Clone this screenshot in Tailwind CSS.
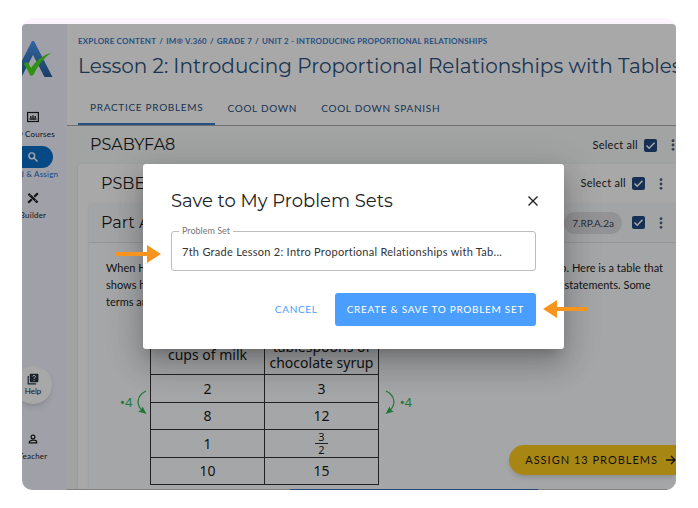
<!DOCTYPE html>
<html lang="en">
<head>
  <meta charset="UTF-8">
  <meta name="viewport" content="width=device-width,initial-scale=1">
  <title>Save to My Problem Sets</title>
  <script src="https://cdn.jsdelivr.net/npm/@tailwindcss/browser@4"></script>
</head>
<body class="bg-white px-[22px] pt-[18px] font-['Lato',sans-serif] text-[#1c1c1c]">
  <div class="bg-[#fcf4fd] rounded-xl pt-[6px]">
    <div class="relative flex overflow-hidden rounded-t-sm rounded-b-[10px] bg-white">

      <!-- Sidebar -->
      <nav class="flex w-[45px] shrink-0 justify-end overflow-hidden bg-[#f1f3ff]">
        <div class="flex w-[68px] shrink-0 flex-col items-center pt-4 text-[8px] leading-3 tracking-wide whitespace-nowrap">
          <svg class="h-10 w-10" viewBox="0 0 40 40">
            <defs>
              <linearGradient id="logo" x1="0" y1="0" x2="0" y2="1">
                <stop offset="0" stop-color="#4c9af2"/>
                <stop offset="1" stop-color="#285f9c"/>
              </linearGradient>
            </defs>
            <path fill="url(#logo)" d="M19 1h2l18.500 36h-8L20 15 8.500 37h-8z"/>
            <path fill="#4ade1c" d="M10.800 24c1-1.200 2.200-1.900 3.400-1.700 1.500 1.700 2.800 3.600 3.900 5.800C23 20.500 30 15.200 38.500 12.800c-8 5.200-13.500 12.500-17.700 21.700-1.200 1-2.500 1.300-3.600 1.100-1.800-4.300-3.900-8.200-6.400-11.600z"/>
          </svg>
          <a href="#" class="mt-[31px] flex flex-col items-center">
            <svg class="h-3 w-3" viewBox="0 0 12 12" fill="none" stroke="#1c1c1c">
              <rect x=".6" y="1.500" width="10.800" height="9" stroke-width="1.200"/>
              <path d="M2.500 8h7" stroke-width="1.600"/>
              <path d="M3.800 5v2M6 4.300v3M8.200 5v2" stroke-width="1.300"/>
            </svg>
            <span class="mt-[5px]">My Courses</span>
          </a>
          <a href="#" class="mt-1.5 flex flex-col items-center text-[#176bd0]">
            <span class="flex h-[22px] w-10 items-center justify-center rounded-full bg-[#0b6fc8]">
              <svg class="h-3 w-3" viewBox="0 0 12 12" fill="none" stroke="#fff" stroke-width="1.400">
                <circle cx="4.800" cy="4.800" r="2.900"/>
                <path d="M7 7l3.500 3.500"/>
              </svg>
            </span>
            <span>Find &amp; Assign</span>
          </a>
          <a href="#" class="mt-3 flex flex-col items-center">
            <svg class="h-3 w-3" viewBox="0 0 12 12" fill="none" stroke="#1c1c1c">
              <path d="M1.500 1.800l9 8.700" stroke-width="2.400"/>
              <path d="M10.800 1.200L7.300 4.700M4.800 7.200L1.200 10.800" stroke-width="2.200"/>
              <path d="M2.500 4l1.500-1.500M7.800 9.200l1.500-1.500" stroke="#f1f3ff" stroke-width=".6"/>
            </svg>
            <span class="mt-[5px]">Builder</span>
          </a>
          <a href="#" class="mt-auto flex h-[38px] w-[38px] flex-col items-center justify-center rounded-full bg-white tracking-normal shadow-md">
            <svg class="h-3 w-3" viewBox="0 0 12 12">
              <path fill="none" stroke="#2a3342" stroke-width="1.200" d="M1.200 3v7.900h7.900"/>
              <rect x="2.800" y=".7" width="8.600" height="8.600" rx=".8" fill="#2a3342"/>
              <path fill="none" stroke="#fff" d="M5.600 3.500c.2-1.500 3-1.400 2.900.2 0 1-1.400 1-1.400 2.100M7.100 6.800v1"/>
            </svg>
            Help
          </a>
          <a href="#" class="mt-[29px] mb-7 flex flex-col items-center">
            <svg class="h-3 w-3" viewBox="0 0 12 12" fill="none" stroke="#1c1c1c" stroke-width="1.200">
              <circle cx="6" cy="4" r="1.900"/>
              <path d="M2.300 9.900V9c0-1.100 2.200-1.800 3.700-1.800S9.700 7.900 9.700 9v.9z"/>
            </svg>
            <span class="mt-[5px]">Teacher</span>
          </a>
        </div>
      </nav>

      <!-- Page -->
      <main class="min-w-0 flex-1 overflow-hidden border-b border-[#c2c2c4] bg-[#f6f8f8]">
        <header class="border-b border-[#aaaaaa] bg-white pt-3 pl-[11px] whitespace-nowrap text-[#2a507c]">
          <div class="flex gap-[3px] text-[8px] leading-[10px] font-bold tracking-wide text-[#3a78c8]">
            <a href="#">EXPLORE CONTENT</a><span>/</span>
            <a href="#">IM® V.360</a><span>/</span>
            <a href="#">GRADE 7</a><span>/</span>
            <a href="#">UNIT 2 - INTRODUCING PROPORTIONAL RELATIONSHIPS</a>
          </div>
          <h1 class="mt-[5px] font-['Montserrat','Inter',sans-serif] text-[20px] leading-[30px]">Lesson 2: Introducing Proportional Relationships with Tables</h1>
          <div class="mt-2.5 flex text-[10px] tracking-[0.07em]">
            <button class="h-[34px] border-b-2 border-[#3a78c8] px-3">PRACTICE PROBLEMS</button>
            <button class="h-[34px] px-3">COOL DOWN</button>
            <button class="h-[34px] px-3">COOL DOWN SPANISH</button>
          </div>
        </header>

        <div class="flex h-[38px] items-center gap-[13px] pl-[23px]">
          <h2 class="flex-1 font-['Montserrat','Inter',sans-serif] text-[16px]">PSABYFA8</h2>
          <label class="flex items-center gap-1.5 text-[11px] tracking-wide">Select all
            <span class="grid">
              <input type="checkbox" checked class="col-start-1 row-start-1 h-[13px] w-[13px] appearance-none rounded-[2px] bg-[#214a80]">
              <svg class="pointer-events-none col-start-1 row-start-1 h-[13px] w-[13px]" viewBox="0 0 13 13" fill="none" stroke="#fff" stroke-width="1.500"><path d="M2.500 6.500l2.700 2.700 5.300-5.500"/></svg>
            </span>
          </label>
          <button aria-label="More"><svg class="h-3 w-1.5" viewBox="0 0 6 12" fill="#4a6282"><circle cx="3" cy="1.700" r="1.400"/><circle cx="3" cy="6" r="1.400"/><circle cx="3" cy="10.300" r="1.400"/></svg></button>
        </div>

        <section class="ml-[11px] rounded-tl bg-white pl-[11px] shadow">
          <div class="flex h-[39px] items-center gap-[13px] pr-3 pl-3">
            <h3 class="flex-1 font-['Montserrat','Inter',sans-serif] text-[16px]">PSBEZ3K</h3>
            <label class="flex items-center gap-1.5 text-[11px] tracking-wide">Select all
              <span class="grid">
                <input type="checkbox" checked class="col-start-1 row-start-1 h-[13px] w-[13px] appearance-none rounded-[2px] bg-[#214a80]">
                <svg class="pointer-events-none col-start-1 row-start-1 h-[13px] w-[13px]" viewBox="0 0 13 13" fill="none" stroke="#fff" stroke-width="1.500"><path d="M2.500 6.500l2.700 2.700 5.300-5.500"/></svg>
              </span>
            </label>
            <button aria-label="More"><svg class="h-3 w-1.5" viewBox="0 0 6 12" fill="#4a6282"><circle cx="3" cy="1.700" r="1.400"/><circle cx="3" cy="6" r="1.400"/><circle cx="3" cy="10.300" r="1.400"/></svg></button>
          </div>

          <article class="rounded-tl bg-[#fbfcff] shadow-sm">
            <div class="flex h-10 items-center gap-[13px] border-b border-[#e3e4e6] bg-[#f8f9fb] pr-3 pl-3">
              <h4 class="flex-1 font-['Montserrat','Inter',sans-serif] text-[16px]">Part A</h4>
              <div class="flex items-center gap-2.5">
                <span class="rounded-full bg-[#dfe0e4] px-2 text-[10px] leading-[22px] text-[#3c4450]">7.RP.A.2a</span>
                <span class="grid">
                  <input type="checkbox" aria-label="Select Part A" checked class="col-start-1 row-start-1 h-[13px] w-[13px] appearance-none rounded-[2px] bg-[#214a80]">
                  <svg class="pointer-events-none col-start-1 row-start-1 h-[13px] w-[13px]" viewBox="0 0 13 13" fill="none" stroke="#fff" stroke-width="1.500"><path d="M2.500 6.500l2.700 2.700 5.300-5.500"/></svg>
                </span>
              </div>
              <button aria-label="More"><svg class="h-3 w-1.5" viewBox="0 0 6 12" fill="#4a6282"><circle cx="3" cy="1.700" r="1.400"/><circle cx="3" cy="6" r="1.400"/><circle cx="3" cy="10.300" r="1.400"/></svg></button>
            </div>

            <p class="pt-4 pl-[17px] text-[11px] leading-[17px] whitespace-nowrap">
              When Han makes chocolate milk, he mixes 2 cups of milk with 3 tablespoons of chocolate syrup. Here is a table that<br>
              shows how to make batches of different sizes. Use the information in the table to complete the statements. Some<br>
              terms are used more than once.
            </p>

            <div class="mt-6 flex items-start pb-1 pl-[31px] font-['Noto_Sans',sans-serif] text-[14px]">
              <div class="mt-14 mr-[3px] flex w-[27px] items-center justify-between text-[13px] leading-6 text-[#36b553]">
                •4
                <svg class="h-6 w-2.5 shrink-0" viewBox="0 0 10 24"><path d="M9 1C-1 6-.5 15 5 20" fill="none" stroke="#36b553" stroke-width="1.200"/><path fill="#36b553" d="M9.500 24L1 21.500l3-1.500 1.500-3.500z"/></svg>
              </div>
              <table class="border-collapse border border-[#333] text-center leading-4">
                <thead>
                  <tr class="h-10">
                    <th class="w-[114px] border border-[#333] font-normal">cups of milk</th>
                    <th class="w-[114px] border border-[#333] font-normal">tablespoons of chocolate syrup</th>
                  </tr>
                </thead>
                <tbody>
                  <tr class="h-7"><td class="border border-[#333]">2</td><td class="border border-[#333]">3</td></tr>
                  <tr class="h-[27px]"><td class="border border-[#333]">8</td><td class="border border-[#333]">12</td></tr>
                  <tr class="h-7">
                    <td class="border border-[#333]">1</td>
                    <td class="border border-[#333]">
                      <span class="inline-flex flex-col align-middle text-[11px] leading-3">
                        <span class="border-b border-[#333] px-[3px]">3</span>
                        <span>2</span>
                      </span>
                    </td>
                  </tr>
                  <tr class="h-[27px]"><td class="border border-[#333]">10</td><td class="border border-[#333]">15</td></tr>
                </tbody>
              </table>
              <div class="mt-14 ml-1.5 flex w-[27px] items-center justify-between text-[13px] leading-6 text-[#36b553]">
                <svg class="h-6 w-2.5 shrink-0" viewBox="0 0 10 24"><path d="M1 1c10 5 9.500 14 4 19" fill="none" stroke="#36b553" stroke-width="1.200"/><path fill="#36b553" d="M.5 24L9 21.500 6 20l-1.500-3.500z"/></svg>
                •4
              </div>
            </div>
          </article>
        </section>
      </main>

      <button class="absolute right-0 bottom-[15px] flex h-[30px] items-center gap-2 rounded-l-full bg-[#ffcb1f] pl-4 text-[11px] tracking-[1px] shadow-md">
        ASSIGN 13 PROBLEMS
        <svg class="h-3 w-2.5" viewBox="0 0 10 12" fill="none" stroke="#1c1c1c" stroke-width="1.300"><path d="M0 6h9M5 2l4 4-4 4"/></svg>
      </button>
      <div class="absolute bottom-0 left-[268px] h-px w-[248px] bg-[#3a6fb4]"></div>

      <!-- Backdrop and dialog -->
      <div class="absolute inset-0 flex items-start justify-center bg-black/34 pt-[140px] pl-[9px]">
        <div role="dialog" aria-labelledby="dialog-title" class="w-[421px] rounded-[3px] bg-white px-7 pt-[25px] pb-[23px] shadow-[0_8px_12px_-5px_rgba(0,0,0,0.2),0_18px_30px_2px_rgba(0,0,0,0.14),0_7px_36px_6px_rgba(0,0,0,0.12)]">
          <div class="flex items-center justify-between">
            <h2 id="dialog-title" class="font-['Montserrat','Inter',sans-serif] text-[18px] leading-6 text-[#222]">Save to My Problem Sets</h2>
            <button aria-label="Close" class="-mr-0.5">
              <svg class="h-2.5 w-2.5" viewBox="0 0 10 10" fill="none" stroke="#222" stroke-width="1.400"><path d="M.5.5l9 9M9.500.5l-9 9"/></svg>
            </button>
          </div>
          <div class="relative mt-[18px]">
            <label for="problem-set" class="absolute -top-[5px] left-2 bg-white px-[3px] text-[9px] leading-[10px] text-[#777]">Problem Set</label>
            <input id="problem-set" type="text" value="7th Grade Lesson 2: Intro Proportional Relationships with Tab..." class="h-10 w-full rounded-[3px] border border-[#bdbdbd] px-2.5 text-[11px] tracking-wide text-[#333]">
          </div>
          <div class="mt-[22px] flex justify-end gap-1.5 text-[10px] tracking-[0.07em]">
            <button class="h-[33px] px-[11px] text-[#4a9eff]">CANCEL</button>
            <button class="h-[33px] rounded-[3px] bg-[#4a9eff] px-3 text-white">CREATE &amp; SAVE TO PROBLEM SET</button>
          </div>
        </div>
      </div>

      <!-- Callout arrows -->
      <svg class="absolute top-[221px] left-[94px] h-[18px] w-[45px]" viewBox="0 0 45 18" fill="#f7941d"><path d="M0 7h31V0l14 9-14 9v-7H0z"/></svg>
      <svg class="absolute top-[276px] left-[521px] h-[18px] w-[45px]" viewBox="0 0 45 18" fill="#f7941d"><path d="M45 7H14V0L0 9l14 9v-7h31z"/></svg>
    </div>
  </div>
</body>
</html>
